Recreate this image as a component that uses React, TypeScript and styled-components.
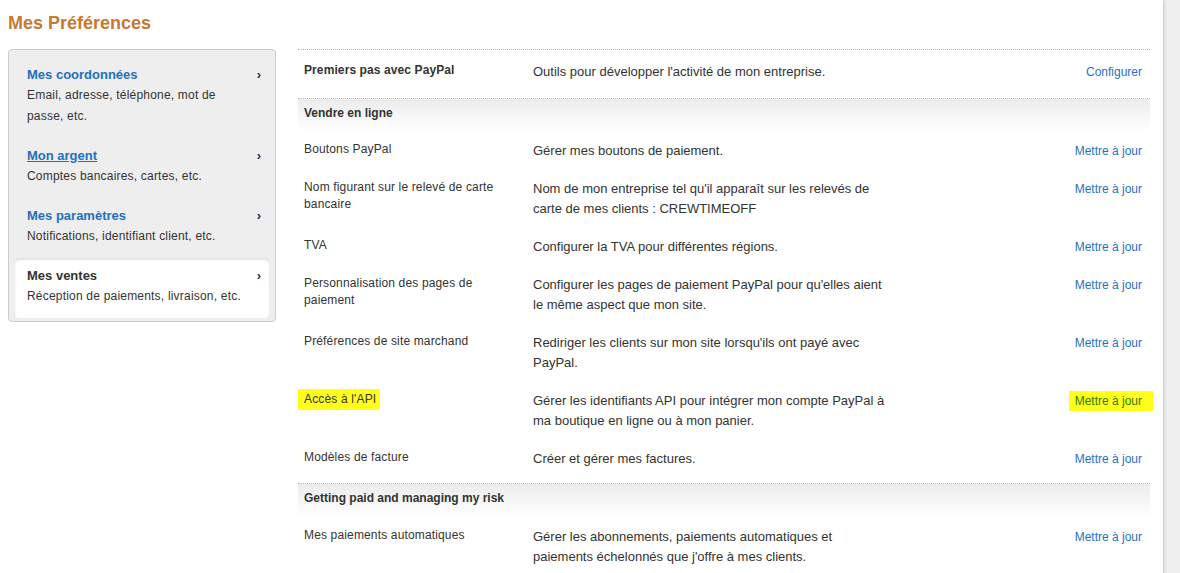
import styled, { createGlobalStyle } from 'styled-components';

const GlobalStyle = createGlobalStyle`
  html, body {
    margin: 0;
    padding: 0;
    background: #efefef;
    font-family: "Liberation Sans", Arial, sans-serif;
    color: #333;
  }
`;

const Page = styled.div`
  width: 1163px;
  min-height: 100vh;
  background: #fff;
  box-shadow: 1px 0 3px rgba(0, 0, 0, 0.18);
  padding: 12px 13px 0 8px;
  box-sizing: border-box;
`;

const Title = styled.h1`
  margin: 0 0 15px;
  font-size: 18px;
  line-height: 22px;
  font-weight: bold;
  color: #c8792f;
`;

const Layout = styled.div`
  display: flex;
  align-items: flex-start;
  gap: 22px;
`;

const Sidebar = styled.nav`
  width: 268px;
  box-sizing: border-box;
  background: #eee;
  border: 1px solid #ccc;
  border-radius: 4px;
  padding: 7px 6px 3px;
`;

const NavItem = styled.div<{ $active?: boolean }>`
  position: relative;
  padding: 8px 12px 11px;
  border-radius: 4px;
  background: ${({ $active }) => ($active ? '#fff' : 'transparent')};
  box-shadow: ${({ $active }) => ($active ? 'inset 0 2px 2px rgba(0,0,0,0.12)' : 'none')};
`;

const NavTitle = styled.div<{ $active?: boolean; $underline?: boolean }>`
  font-size: 13px;
  font-weight: bold;
  line-height: 20px;
  color: ${({ $active }) => ($active ? '#333' : '#1f6fc0')};
  text-decoration: ${({ $underline }) => ($underline ? 'underline' : 'none')};
`;

const NavDesc = styled.div`
  font-size: 12px;
  letter-spacing: 0.2px;
  line-height: 21px;
  color: #333;
  white-space: nowrap;
`;

const Chevron = styled.span`
  position: absolute;
  right: 8px;
  top: 8px;
  font-size: 13px;
  font-weight: bold;
  line-height: 20px;
  color: #1b2a48;
`;

const Main = styled.div`
  flex: 1;
  font-size: 12px;
`;

const Section = styled.div<{ $pad?: number }>`
  border-top: 1px dotted #bbb;
  padding-bottom: ${({ $pad }) => $pad ?? 5}px;
`;

const SectionHeader = styled.div`
  padding: 5px 6px 10px;
  line-height: 18px;
  font-weight: bold;
  background: linear-gradient(#ececec, #fff);
`;

const Row = styled.div<{ $top?: number; $bottom?: number }>`
  display: grid;
  grid-template-columns: 229px 360px 1fr;
  padding: ${({ $top }) => $top ?? 9}px 8px ${({ $bottom }) => $bottom ?? 9}px 6px;
`;

const Name = styled.div<{ $bold?: boolean }>`
  line-height: 17px;
  font-weight: ${({ $bold }) => ($bold ? 'bold' : 'normal')};
  letter-spacing: ${({ $bold }) => ($bold ? '0.1px' : '0.15px')};
  white-space: nowrap;
`;

const Desc = styled.div`
  font-size: 13px;
  line-height: 20px;
  white-space: nowrap;
`;

const Action = styled.div`
  line-height: 20px;
  text-align: right;
`;

const Link = styled.a<{ $mark?: boolean }>`
  color: ${({ $mark }) => ($mark ? '#2f7a12' : '#1f72c4')};
  text-decoration: none;
  background: ${({ $mark }) => ($mark ? '#ffff1a' : 'transparent')};
  padding: ${({ $mark }) => ($mark ? '3px 11px 3px 6px' : '0')};
  margin-right: ${({ $mark }) => ($mark ? '-11px' : '0')};
`;

const Mark = styled.span`
  background: #ffff1a;
  padding: 3px 4px 4px 6px;
  margin-left: -6px;
`;

const Lines = ({ lines }: { lines: string[] }) => (
  <>
    {lines.map((l, i) => (
      <span key={i}>
        {i > 0 && <br />}
        {l}
      </span>
    ))}
  </>
);

const nav = [
  { title: 'Mes coordonnées', desc: ['Email, adresse, téléphone, mot de', 'passe, etc.'] },
  { title: 'Mon argent', desc: ['Comptes bancaires, cartes, etc.'], underline: true },
  { title: 'Mes paramètres', desc: ['Notifications, identifiant client, etc.'] },
  { title: 'Mes ventes', desc: ['Réception de paiements, livraison, etc.'], active: true },
];

const sales = [
  { name: ['Boutons PayPal'], desc: ['Gérer mes boutons de paiement.'] },
  {
    name: ['Nom figurant sur le relevé de carte', 'bancaire'],
    desc: ["Nom de mon entreprise tel qu'il apparaît sur les relevés de", 'carte de mes clients : CREWTIMEOFF'],
  },
  { name: ['TVA'], desc: ['Configurer la TVA pour différentes régions.'] },
  {
    name: ['Personnalisation des pages de', 'paiement'],
    desc: ["Configurer les pages de paiement PayPal pour qu'elles aient", 'le même aspect que mon site.'],
  },
  {
    name: ['Préférences de site marchand'],
    desc: ["Rediriger les clients sur mon site lorsqu'ils ont payé avec", 'PayPal.'],
  },
  {
    name: ["Accès à l'API"],
    desc: ['Gérer les identifiants API pour intégrer mon compte PayPal à', 'ma boutique en ligne ou à mon panier.'],
    mark: true,
  },
  { name: ['Modèles de facture'], desc: ['Créer et gérer mes factures.'] },
];

export default function App() {
  return (
    <>
      <GlobalStyle />
      <Page>
        <Title>Mes Préférences</Title>
        <Layout>
          <Sidebar>
            {nav.map((n) => (
              <NavItem key={n.title} $active={n.active}>
                <NavTitle $active={n.active} $underline={n.underline}>{n.title}</NavTitle>
                <NavDesc><Lines lines={n.desc} /></NavDesc>
                <Chevron>›</Chevron>
              </NavItem>
            ))}
          </Sidebar>

          <Main>
            <Section $pad={0}>
              <Row $top={12} $bottom={16}>
                <Name $bold>Premiers pas avec PayPal</Name>
                <Desc>Outils pour développer l'activité de mon entreprise.</Desc>
                <Action><Link href="#">Configurer</Link></Action>
              </Row>
            </Section>

            <Section>
              <SectionHeader>Vendre en ligne</SectionHeader>
              {sales.map((s) => (
                <Row key={s.name[0]}>
                  <Name>{s.mark ? <Mark>{s.name[0]}</Mark> : <Lines lines={s.name} />}</Name>
                  <Desc><Lines lines={s.desc} /></Desc>
                  <Action><Link href="#" $mark={s.mark}>Mettre à jour</Link></Action>
                </Row>
              ))}
            </Section>

            <Section>
              <SectionHeader>Getting paid and managing my risk</SectionHeader>
              <Row $top={10}>
                <Name>Mes paiements automatiques</Name>
                <Desc>
                  <Lines lines={['Gérer les abonnements, paiements automatiques et', "paiements échelonnés que j'offre à mes clients."]} />
                </Desc>
                <Action><Link href="#">Mettre à jour</Link></Action>
              </Row>
            </Section>
          </Main>
        </Layout>
      </Page>
    </>
  );
}
